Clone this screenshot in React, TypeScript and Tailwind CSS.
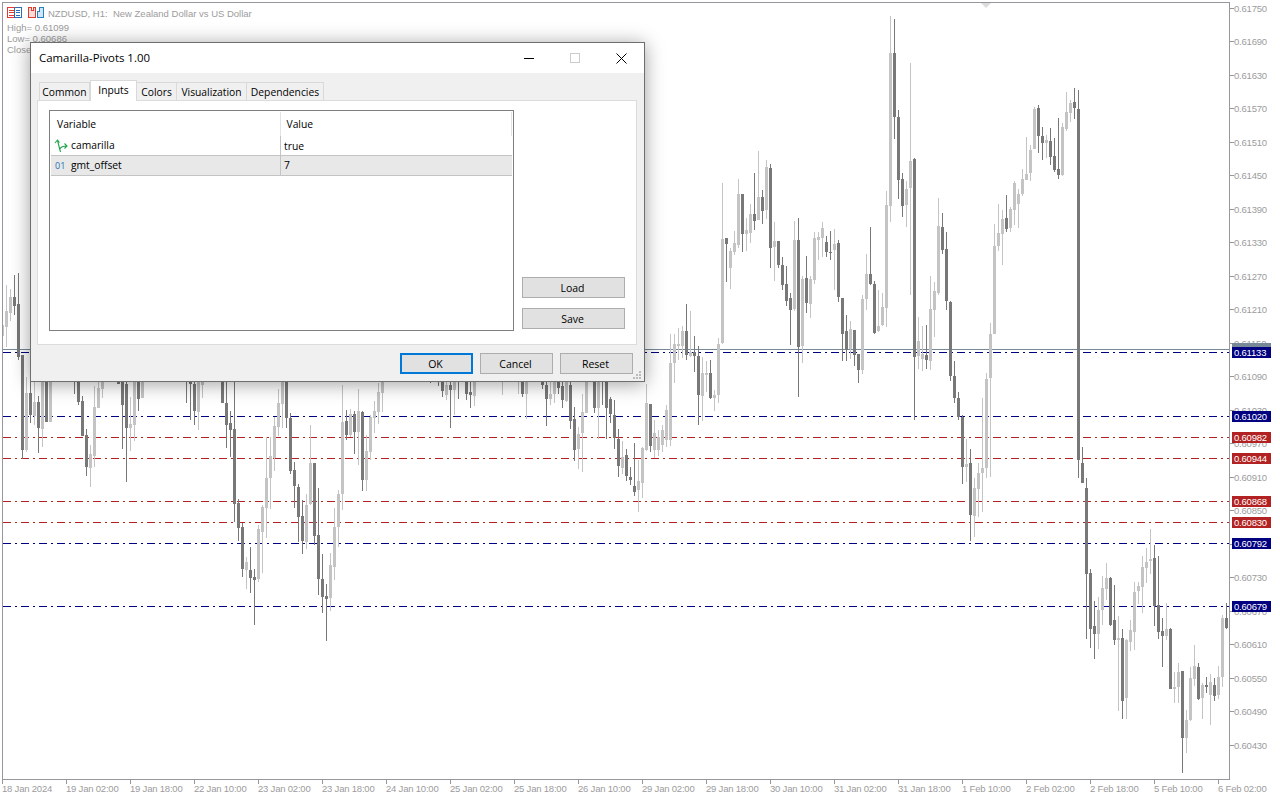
const candles: number[][] = [
  // x, high, bodyTop, bodyBottom, low, dark
  [2, 325, 325, 336, 340, 0], [6, 285, 311, 327, 347, 0], [10, 289, 297, 313, 321, 0], [14, 275, 297, 306, 315, 1],
  [18, 273, 304, 357, 360, 1], [22, 355, 355, 450, 459, 1], [26, 377, 393, 450, 452, 0], [30, 370, 393, 415, 423, 1],
  [34, 370, 402, 416, 425, 0], [38, 396, 402, 428, 453, 1], [42, 370, 375, 429, 447, 0], [46, 370, 375, 422, 422, 1],
  [50, 370, 375, 422, 422, 0], [74, 370, 375, 380, 394, 1], [78, 370, 375, 402, 405, 1], [82, 396, 401, 436, 436, 1],
  [86, 429, 435, 467, 476, 1], [90, 445, 454, 468, 487, 0], [94, 386, 407, 456, 467, 0], [98, 370, 388, 408, 408, 0],
  [102, 370, 375, 389, 398, 0], [118, 370, 375, 384, 384, 1], [122, 370, 375, 405, 449, 1], [126, 370, 384, 428, 482, 1],
  [130, 397, 424, 428, 451, 0], [134, 370, 375, 425, 441, 0], [138, 370, 375, 399, 411, 1], [142, 370, 375, 398, 398, 0],
  [186, 370, 375, 378, 403, 1], [190, 370, 375, 384, 420, 1], [194, 370, 384, 411, 425, 1], [198, 370, 375, 412, 430, 0],
  [202, 370, 375, 385, 398, 0], [222, 370, 375, 403, 403, 1], [226, 370, 403, 425, 448, 1], [230, 411, 423, 430, 457, 1],
  [234, 370, 429, 504, 522, 1], [238, 499, 503, 528, 541, 1], [242, 523, 527, 569, 577, 1], [246, 557, 562, 570, 589, 0],
  [250, 547, 570, 578, 593, 1], [254, 569, 577, 580, 625, 1], [258, 525, 529, 579, 582, 0], [262, 505, 507, 532, 573, 0],
  [266, 437, 478, 508, 538, 0], [270, 437, 456, 478, 509, 0], [274, 417, 426, 458, 471, 0], [278, 389, 403, 427, 436, 0],
  [282, 370, 375, 404, 428, 0], [286, 370, 375, 418, 428, 1], [290, 413, 418, 471, 474, 1], [294, 462, 470, 486, 508, 1],
  [298, 484, 487, 517, 542, 1], [302, 500, 516, 541, 554, 1], [306, 494, 505, 542, 549, 0], [310, 425, 463, 504, 505, 0],
  [314, 463, 463, 536, 545, 1], [318, 488, 535, 579, 595, 1], [322, 554, 579, 597, 613, 1], [326, 584, 596, 599, 641, 1],
  [330, 553, 565, 598, 611, 0], [334, 508, 527, 567, 580, 0], [338, 490, 494, 527, 547, 0], [342, 385, 422, 494, 510, 0],
  [346, 410, 421, 435, 440, 1], [350, 409, 414, 435, 437, 0], [354, 411, 414, 432, 454, 1], [358, 389, 411, 432, 465, 0],
  [362, 411, 412, 480, 491, 1], [366, 435, 451, 480, 491, 0], [370, 415, 417, 452, 460, 0], [374, 401, 411, 418, 433, 0],
  [378, 383, 392, 412, 424, 0], [382, 370, 375, 393, 412, 0], [430, 370, 375, 378, 383, 1], [438, 370, 375, 378, 386, 1],
  [442, 370, 375, 391, 397, 1], [446, 370, 385, 395, 400, 0], [450, 370, 385, 390, 428, 1], [454, 370, 375, 390, 415, 0],
  [458, 370, 375, 378, 399, 1], [466, 370, 375, 394, 400, 1], [470, 370, 392, 395, 408, 1], [474, 370, 375, 396, 406, 0],
  [502, 370, 375, 378, 395, 0], [518, 370, 375, 378, 394, 0], [522, 370, 375, 394, 397, 1], [526, 370, 375, 394, 419, 0],
  [542, 370, 375, 385, 389, 1], [546, 370, 385, 399, 426, 1], [550, 370, 394, 399, 405, 0], [554, 370, 375, 394, 403, 0],
  [558, 370, 375, 388, 394, 1], [562, 370, 386, 400, 408, 1], [566, 370, 375, 401, 402, 0], [570, 370, 385, 421, 429, 1],
  [574, 407, 419, 450, 461, 1], [578, 427, 434, 449, 469, 0], [582, 394, 412, 433, 472, 0], [586, 370, 375, 413, 413, 0],
  [594, 370, 375, 408, 413, 1], [598, 370, 375, 408, 439, 0], [602, 370, 375, 380, 405, 1], [606, 370, 375, 408, 439, 1],
  [610, 397, 399, 414, 423, 1], [614, 400, 415, 438, 449, 1], [618, 429, 439, 466, 477, 1], [622, 441, 457, 468, 474, 0],
  [626, 449, 455, 476, 481, 1], [630, 467, 477, 480, 485, 1], [634, 443, 486, 492, 496, 1], [638, 460, 481, 490, 512, 0],
  [642, 447, 448, 483, 498, 0], [646, 384, 403, 450, 451, 0], [650, 404, 404, 446, 452, 1], [654, 420, 433, 450, 458, 0],
  [658, 430, 437, 450, 456, 0], [662, 425, 430, 445, 452, 0], [666, 405, 410, 440, 447, 0], [670, 334, 363, 440, 446, 0],
  [674, 334, 344, 363, 383, 0], [678, 328, 344, 346, 360, 0], [682, 326, 331, 346, 358, 0], [686, 304, 331, 355, 360, 1],
  [690, 311, 352, 356, 357, 0], [694, 336, 352, 356, 372, 1], [698, 346, 356, 395, 425, 1], [702, 357, 373, 396, 421, 0],
  [706, 361, 373, 375, 392, 0], [710, 360, 373, 398, 399, 1], [714, 390, 395, 398, 411, 0], [718, 338, 344, 395, 403, 0],
  [722, 183, 239, 343, 344, 0], [726, 238, 238, 244, 282, 1], [730, 248, 251, 268, 289, 0], [734, 231, 243, 252, 255, 0],
  [738, 179, 194, 245, 248, 0], [742, 194, 194, 234, 252, 1], [746, 218, 230, 234, 251, 0], [750, 204, 214, 233, 243, 0],
  [754, 173, 214, 221, 230, 1], [758, 151, 197, 220, 220, 0], [762, 190, 197, 211, 224, 1], [766, 160, 167, 210, 219, 0],
  [770, 164, 168, 248, 268, 1], [774, 222, 241, 247, 281, 0], [778, 241, 241, 265, 268, 1], [782, 257, 265, 285, 290, 1],
  [786, 266, 284, 301, 306, 1], [790, 293, 298, 310, 345, 1], [794, 221, 240, 309, 311, 0], [798, 218, 240, 347, 397, 1],
  [802, 276, 279, 346, 363, 0], [806, 256, 278, 303, 313, 1], [810, 276, 279, 304, 318, 0], [814, 232, 238, 280, 284, 0],
  [818, 232, 237, 240, 260, 0], [822, 222, 228, 238, 257, 0], [826, 236, 242, 252, 257, 1], [830, 231, 252, 253, 260, 1],
  [834, 229, 244, 250, 290, 0], [838, 240, 243, 297, 302, 1], [842, 298, 298, 334, 361, 1], [846, 315, 331, 350, 361, 1],
  [850, 321, 329, 349, 359, 0], [854, 330, 330, 355, 366, 1], [858, 354, 354, 370, 383, 1], [862, 295, 299, 370, 374, 0],
  [866, 254, 274, 299, 310, 0], [870, 227, 274, 284, 285, 1], [874, 281, 284, 333, 334, 1], [878, 290, 326, 331, 332, 0],
  [882, 293, 307, 325, 326, 0], [886, 191, 205, 308, 327, 0], [890, 16, 53, 206, 222, 0], [894, 19, 53, 117, 139, 1],
  [898, 110, 117, 180, 199, 1], [902, 173, 179, 206, 217, 1], [906, 181, 189, 205, 227, 0], [910, 63, 161, 188, 295, 0],
  [914, 158, 159, 357, 420, 1], [918, 317, 341, 356, 369, 0], [922, 326, 354, 359, 371, 0], [926, 325, 355, 360, 369, 1],
  [930, 276, 309, 361, 370, 0], [934, 282, 291, 310, 337, 0], [938, 198, 226, 293, 295, 0], [942, 213, 227, 250, 254, 1],
  [946, 232, 249, 301, 310, 1], [950, 301, 302, 376, 381, 1], [954, 361, 376, 398, 403, 1], [958, 392, 398, 417, 420, 1],
  [962, 415, 417, 467, 484, 1], [966, 439, 464, 467, 482, 0], [970, 449, 463, 515, 541, 1], [974, 478, 488, 516, 537, 0],
  [978, 463, 473, 489, 517, 0], [982, 398, 468, 473, 512, 0], [986, 373, 379, 468, 478, 0], [990, 323, 334, 378, 477, 0],
  [994, 224, 246, 334, 334, 0], [998, 204, 233, 246, 251, 0], [1002, 210, 219, 234, 265, 0], [1006, 195, 218, 229, 232, 1],
  [1010, 207, 209, 228, 232, 0], [1014, 181, 183, 210, 225, 0], [1018, 189, 194, 204, 228, 0], [1022, 169, 179, 194, 196, 0],
  [1026, 137, 174, 180, 180, 0], [1030, 145, 150, 173, 181, 0], [1034, 107, 109, 149, 149, 0], [1038, 105, 108, 136, 153, 1],
  [1042, 127, 136, 143, 160, 1], [1046, 135, 140, 143, 158, 0], [1050, 128, 141, 157, 165, 1], [1054, 138, 156, 170, 172, 1],
  [1058, 118, 169, 175, 179, 1], [1062, 123, 127, 175, 176, 0], [1066, 92, 112, 129, 131, 0], [1070, 100, 103, 113, 122, 0],
  [1074, 88, 102, 108, 119, 1], [1078, 90, 109, 460, 478, 1], [1082, 447, 463, 483, 483, 1], [1086, 478, 488, 574, 639, 1],
  [1090, 569, 573, 629, 648, 1], [1094, 601, 626, 634, 659, 1], [1098, 597, 610, 634, 649, 0], [1102, 576, 588, 610, 625, 0],
  [1106, 563, 578, 589, 600, 0], [1110, 577, 578, 625, 626, 1], [1114, 585, 620, 640, 645, 1], [1118, 616, 638, 640, 711, 0],
  [1122, 629, 638, 701, 719, 1], [1126, 639, 640, 698, 719, 0], [1130, 620, 630, 642, 651, 0], [1134, 582, 592, 632, 650, 0],
  [1138, 582, 586, 591, 604, 0], [1142, 556, 567, 587, 613, 0], [1146, 548, 562, 568, 583, 0], [1150, 529, 559, 561, 574, 0],
  [1154, 545, 558, 606, 626, 1], [1158, 556, 605, 632, 639, 1], [1162, 618, 631, 636, 667, 1], [1166, 603, 629, 636, 640, 0],
  [1170, 628, 629, 689, 689, 1], [1174, 672, 687, 689, 703, 0], [1178, 663, 672, 687, 703, 0], [1182, 671, 671, 738, 773, 1],
  [1186, 710, 720, 738, 753, 0], [1190, 667, 678, 720, 721, 0], [1194, 645, 666, 679, 686, 0], [1198, 663, 667, 699, 700, 1],
  [1202, 683, 685, 698, 719, 0], [1206, 677, 685, 687, 693, 1], [1210, 674, 682, 695, 725, 0], [1214, 678, 685, 696, 701, 1],
  [1218, 666, 677, 695, 699, 0], [1222, 615, 618, 677, 687, 0], [1226, 603, 618, 628, 629, 1],
];

const prices = [
  "0.61750", "0.61690", "0.61630", "0.61570", "0.61510", "0.61450", "0.61390", "0.61330", "0.61270", "0.61210", "0.61150", "0.61090",
  "0.61030", "0.60970", "0.60910", "0.60850", "0.60790", "0.60730", "0.60670", "0.60610", "0.60550", "0.60490", "0.60430",
];

const times = [
  "18 Jan 2024", "19 Jan 02:00", "19 Jan 18:00", "22 Jan 10:00", "23 Jan 02:00", "23 Jan 18:00", "24 Jan 10:00", "25 Jan 02:00", "25 Jan 18:00", "26 Jan 10:00",
  "29 Jan 02:00", "29 Jan 18:00", "30 Jan 10:00", "31 Jan 02:00", "31 Jan 18:00", "1 Feb 10:00", "2 Feb 02:00", "2 Feb 18:00", "5 Feb 10:00", "6 Feb 02:00",
];

const levels = [
  { y: 352, label: "0.61133", blue: true },
  { y: 416, label: "0.61020", blue: true },
  { y: 437, label: "0.60982", blue: false },
  { y: 458, label: "0.60944", blue: false },
  { y: 501, label: "0.60868", blue: false },
  { y: 522, label: "0.60830", blue: false },
  { y: 543, label: "0.60792", blue: true },
  { y: 606, label: "0.60679", blue: true },
];

function Chart() {
  return (
    <svg width="1280" height="800" className="block">
      <g shapeRendering="crispEdges">
        <line x1="2" y1="349.5" x2="1229" y2="349.5" stroke="#778899" />
        {levels.map((l) => (
          <line key={l.y} x1="3" y1={l.y + 0.5} x2="1229" y2={l.y + 0.5} stroke={l.blue ? "#000080" : "#b22222"} strokeDasharray="8 4 2 4" />
        ))}
        {candles.map(([x, hi, top, bot, lo, dark]) => (
          <g key={x} fill={dark ? "#787878" : "#c4c4c4"}>
            <rect x={x} y={hi} width="1" height={lo - hi} />
            <rect x={x - 1} y={top} width="3" height={Math.max(bot - top, 1)} />
          </g>
        ))}
        <rect x="0" y="0" width="2" height="800" fill="#ffffff" />
        <path d="M2.5 2.5H1229.5V779.5H2.5Z" fill="none" stroke="#96969c" />
        {times.map((t, i) => (
          <line key={t} x1={2.5 + i * 64} y1="780" x2={2.5 + i * 64} y2="784" stroke="#96969c" />
        ))}
        {prices.map((p, i) => (
          <line key={p} x1="1230" y1={Math.floor(8 + i * 33.5) + 0.5} x2="1234" y2={Math.floor(8 + i * 33.5) + 0.5} stroke="#96969c" />
        ))}
      </g>
      <path d="M981 3H991L986 8Z" fill="#dcdcdc" />
      <g className="fill-[#9c9c9c] text-[9.5px] tracking-[-0.2px]">
        {times.map((t, i) => (
          <text key={t} x={2 + i * 64} y="792">{t}</text>
        ))}
        {prices.map((p, i) => (
          <text key={p} x="1234" y={Math.floor(8 + i * 33.5) + 4}>{p}</text>
        ))}
      </g>
      <rect x="1232" y="343" width="39" height="12" fill="#778899" shapeRendering="crispEdges" />
      {levels.map((l) => (
        <g key={l.y}>
          <rect x="1232" y={l.y - 5} width="39" height="11" fill={l.blue ? "#000080" : "#b22222"} shapeRendering="crispEdges" />
          <text x="1234" y={l.y + 4} className="fill-white text-[9.5px] tracking-[-0.2px]">{l.label}</text>
        </g>
      ))}
    </svg>
  );
}

function ChartIcons() {
  return (
    <svg width="37" height="12" viewBox="0 0 37 12" className="block" fill="none" shapeRendering="crispEdges">
      <path d="M7.5 .5H.5V10.5H7.5M2 3H7M2 5.5H7M2 8H7" stroke="#e03c31" />
      <path d="M7.5 .5H14.5V10.5H7.5V.5M9 3H13M9 5.5H13M9 8H13" stroke="#2a6fb5" />
      <path d="M21.5 .5H24.5V3.5H26.5V.5H28.5V10.5H21.5Z" stroke="#e03c31" fill="#fbdcd8" />
      <path d="M30.5 4.5H32.5V.5H36.5V10.5H30.5Z" stroke="#2a7fc0" fill="#cfe6f7" />
    </svg>
  );
}

function Legend() {
  return (
    <div className="absolute left-[7px] top-[7px] text-[9.5px] leading-[11px] text-[#9c9c9c]">
      <div className="flex items-center gap-[4px]">
        <ChartIcons />
        <span className="whitespace-pre">NZDUSD, H1:  New Zealand Dollar vs US Dollar</span>
      </div>
      <div className="mt-[3px]">High= 0.61099</div>
      <div>Low= 0.60686</div>
      <div>Close= 0.60686</div>
    </div>
  );
}

function Btn({ label, focus, wide }: { label: string; focus?: boolean; wide?: boolean }) {
  return (
    <button
      className={
        focus
          ? "h-[21px] w-[73px] border-2 border-[#0078d7] bg-[#e1e1e1] pt-[2px] pr-[2px] text-[10.5px] text-black"
          : wide
            ? "h-[21px] w-[103px] border border-[#adadad] bg-[#e1e1e1] pt-[2px] pr-[2px] text-[10.5px] text-black"
            : "h-[21px] w-[73px] border border-[#adadad] bg-[#e1e1e1] pt-[2px] pr-[2px] text-[10.5px] text-black"
      }
    >
      {label}
    </button>
  );
}

function BoolIcon() {
  return (
    <svg width="14" height="14" viewBox="0 0 14 14" fill="none" stroke="#1fa64a" strokeWidth="1.1" className="shrink-0">
      <path d="M6.5 13 3.5 1.5M1 4 3.5 1 5.5 3.5" />
      <path d="M5.8 10C7 7.5 9 7 13 7M10.5 4.5 13 7 10.5 9.5" />
    </svg>
  );
}

function Dialog() {
  return (
    <div className="absolute left-[30px] top-[42px] flex h-[340px] w-[615px] flex-col border border-[#6e6e6e] bg-[#f0f0f0] font-['Open_Sans',sans-serif] text-black shadow-[0_2px_18px_rgba(0,0,0,0.38)]">
      <div className="flex h-[30px] shrink-0 items-center bg-white pl-[8px]">
        <span className="flex-1 text-[11.4px]">Camarilla-Pivots 1.00</span>
        <span className="flex h-[30px] w-[46px] items-center justify-center">
          <span className="h-px w-[10px] bg-black" />
        </span>
        <span className="flex h-[30px] w-[46px] items-center justify-center">
          <span className="h-[10px] w-[10px] border border-[#cccccc]" />
        </span>
        <span className="flex h-[30px] w-[46px] items-center justify-center">
          <svg width="11" height="11" viewBox="0 0 11 11" stroke="#000" strokeWidth="1">
            <path d="M.5.5 10.5 10.5M10.5.5.5 10.5" />
          </svg>
        </span>
      </div>

      {/* tabs */}
      <div className="flex h-[27px] shrink-0 items-end pl-[8px] text-[10.3px]">
        <div className="flex h-[18px] w-[51px] items-center justify-center border border-b-0 border-[#d9d9d9] pt-[2px]">Common</div>
        <div className="relative z-10 -mb-px flex h-[21px] w-[47px] items-start justify-center border border-b-0 border-[#d9d9d9] bg-white pt-[2px]">Inputs</div>
        <div className="flex h-[18px] w-[40px] items-center justify-center border border-b-0 border-l-0 border-[#d9d9d9] pt-[2px]">Colors</div>
        <div className="flex h-[18px] w-[70px] items-center justify-center border border-b-0 border-l-0 border-[#d9d9d9] pt-[2px]">Visualization</div>
        <div className="flex h-[18px] w-[77px] items-center justify-center border border-b-0 border-l-0 border-[#d9d9d9] pt-[2px]">Dependencies</div>
      </div>

      {/* panel */}
      <div className="ml-[6px] mr-[7px] flex h-[245px] shrink-0 border border-[#dcdcdc] bg-white pl-[11px] pt-[9px] text-[10.3px]">
        <div className="h-[221px] w-[465px] border border-[#7f7f7f] p-px">
          <div className="flex h-[24px] items-center">
            <div className="flex h-full w-[230px] items-center border-r border-[#e3e3e3] pl-[6px] pt-[2px]">Variable</div>
            <div className="flex h-full w-[232px] items-center border-r border-[#e3e3e3] pl-[6px] pt-[2px]">Value</div>
          </div>
          <div className="flex h-[20px] border-b border-[#c4c4c4]">
            <div className="flex w-[230px] items-center gap-[3px] border-r border-[#c4c4c4] pl-[3px] pt-px">
              <BoolIcon />
              camarilla
            </div>
            <div className="flex items-center pl-[3px] pt-[2px]">true</div>
          </div>
          <div className="flex h-[20px] border-b border-[#c4c4c4] bg-[#e8e8e8]">
            <div className="flex w-[230px] items-center border-r border-[#c4c4c4] pl-[4px] pt-px">
              <span className="w-[16px] text-[9px] text-[#1f6fb0]">01</span>
              gmt_offset
            </div>
            <div className="flex items-center pl-[3px] pt-px">7</div>
          </div>
        </div>
        <div className="ml-[8px] flex h-[219px] flex-col justify-end gap-[10px]">
          <Btn label="Load" wide />
          <Btn label="Save" wide />
        </div>
      </div>

      {/* footer */}
      <div className="relative flex flex-1 items-start justify-end gap-[7px] pr-[11px] pt-[8px]">
        <Btn label="OK" focus />
        <Btn label="Cancel" />
        <Btn label="Reset" />
        <svg width="9" height="9" viewBox="0 0 9 9" fill="#bcbcbc" className="absolute bottom-[1px] right-[2px]" shapeRendering="crispEdges">
          <path d="M6 0h2v2H6zM3 3h2v2H3zM6 3h2v2H6zM0 6h2v2H0zM3 6h2v2H3zM6 6h2v2H6z" />
        </svg>
      </div>
    </div>
  );
}

export default function App() {
  return (
    <div className="relative h-[800px] w-[1280px] overflow-hidden bg-white font-['Liberation_Sans',sans-serif]">
      <Chart />
      <Legend />
      <Dialog />
    </div>
  );
}
